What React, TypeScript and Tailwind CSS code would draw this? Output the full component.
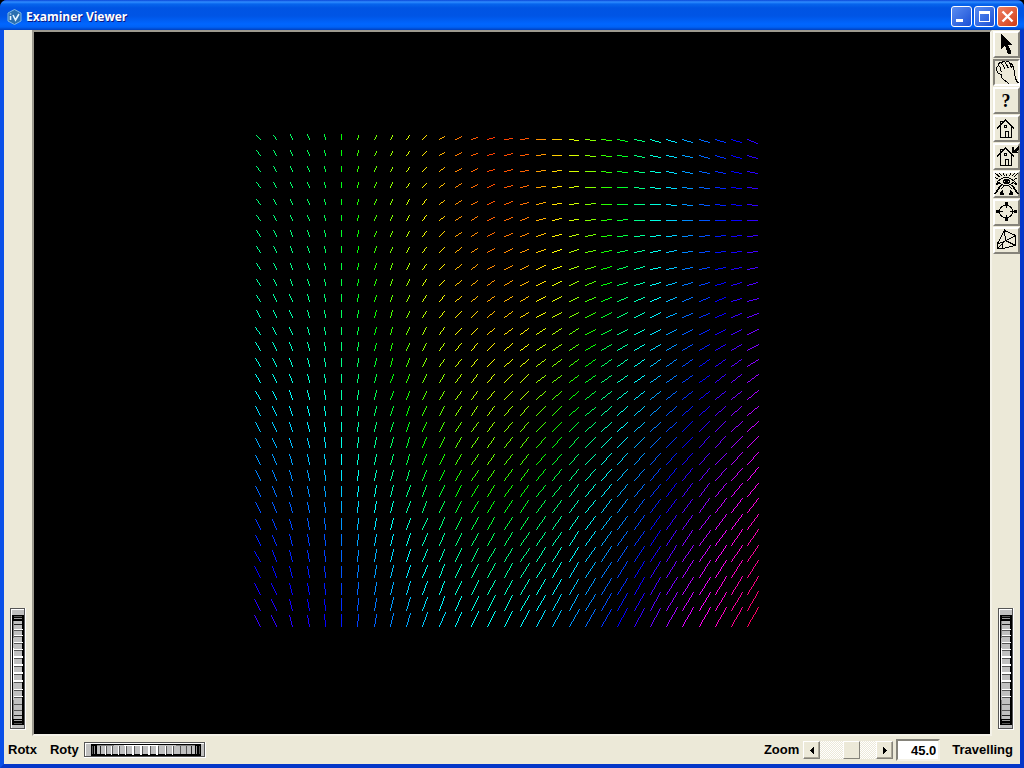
import { useState } from "react"
import type { ReactNode } from "react"

const STEP = 16.25
const CELLS = 31

// arrow lengths sampled every 5 cells, rows go from top to bottom
const DX = [
  [-4, 0, 4, 8, 9.5, 10, 10],
  [-4, 0, 4, 8, 9.5, 10, 10],
  [-4.2, 0, 4, 8, 9.5, 10, 10.5],
  [-5, 0, 4.2, 8, 9.5, 10, 10.5],
  [-5.2, 0, 4.3, 8, 9.5, 10.2, 10.7],
  [-5.5, 0, 4.6, 8.2, 9.7, 10.4, 10.8],
  [-5.8, 0, 4.8, 8.4, 9.8, 10.6, 10.8],
]
const DY = [
  [-4.4, -4.7, -3.6, -1.2, 1, 3, 3.6],
  [-5.4, -5.4, -4.8, -3, -1, 0, 0],
  [-6.5, -6.7, -5.8, -5, -4.2, -3.8, -3.4],
  [-8.2, -8.3, -8, -7.6, -7.2, -7.2, -7.8],
  [-9.5, -10, -10, -10, -10.4, -11, -11.8],
  [-10.3, -11, -11.7, -12.7, -13.8, -14.8, -15.8],
  [-11, -11.7, -13.6, -15.4, -17, -18.8, -19.2],
]
// hues sampled every 2 columns and every 5 rows
const HUE = [
  [145, 143, 135, 105, 82, 53, 28, 13, 19, 48, 88, 126, 170, 202, 228, 250],
  [150, 147, 140, 116, 90, 60, 35, 22, 28, 54, 90, 132, 173, 207, 233, 251],
  [160, 156, 148, 128, 98, 72, 50, 38, 45, 68, 104, 145, 180, 213, 240, 260],
  [178, 174, 164, 147, 122, 95, 78, 68, 72, 95, 128, 165, 197, 226, 252, 275],
  [205, 202, 190, 170, 148, 124, 104, 95, 104, 130, 160, 190, 220, 245, 270, 293],
  [232, 228, 221, 202, 184, 165, 150, 141, 146, 162, 187, 215, 242, 270, 296, 318],
  [253, 249, 242, 225, 209, 193, 182, 177, 181, 195, 215, 240, 264, 292, 314, 337],
]

function sample(table: number[][], col: number, row: number, colStep: number) {
  const c = col / colStep
  const r = row / 5
  const c0 = Math.min(Math.floor(c), table[0].length - 2)
  const r0 = Math.min(Math.floor(r), table.length - 2)
  const fc = c - c0
  const fr = r - r0
  const top = table[r0][c0] * (1 - fc) + table[r0][c0 + 1] * fc
  const bottom = table[r0 + 1][c0] * (1 - fc) + table[r0 + 1][c0 + 1] * fc
  return top * (1 - fr) + bottom * fr
}

// one unit square per step, so a line never gets thicker than a pixel
function pixelLine(x: number, y: number, dx: number, dy: number) {
  const steps = Math.max(Math.abs(dx), Math.abs(dy), 1)
  let d = ""
  for (let i = 0; i <= steps; i++) {
    d += `M${Math.round(x + (dx * i) / steps)} ${Math.round(y + (dy * i) / steps)}h1v1h-1z`
  }
  return d
}

function VectorField() {
  const lines: ReactNode[] = []
  for (let row = 0; row < CELLS; row++) {
    for (let col = 0; col < CELLS; col++) {
      const x = Math.floor(8.4 + col * STEP)
      const y = Math.floor(11 + row * STEP)
      const dx = Math.round(sample(DX, col, row, 5))
      const dy = Math.round(sample(DY, col, row, 5))
      lines.push(
        <path
          key={`${row}-${col}`}
          d={pixelLine(x, y, dx, dy)}
          fill={`hsl(${Math.round(sample(HUE, col, row, 2))} 100% 50%)`}
        />
      )
    }
  }
  return (
    <svg width="520" height="510" viewBox="0 0 520 510" shapeRendering="crispEdges" aria-label="Vector field">
      {lines}
    </svg>
  )
}

// [position, highlight thickness, line colour] of each groove along the wheel
const GROOVES: [number, number, string][] = [
  [16, 0, "#222"],
  [22, 1, "#555"],
  [28, 1, "#555"],
  [35, 1, "#555"],
  [42, 1, "#555"],
  [50, 2, "#555"],
  [58, 2, "#555"],
  [66, 2, "#555"],
  [74, 2, "#555"],
  [82, 1, "#555"],
  [89, 1, "#555"],
  [96, 0, "#555"],
  [102, 0, "#555"],
  [107, 0, "#222"],
]

function Wheel({ label, vertical = false }: { label: string; vertical?: boolean }) {
  return (
    <div className={vertical ? "relative h-[122px] w-4 shrink-0" : "relative h-4 w-[122px] shrink-0"}>
      <svg
        className="block"
        width={vertical ? 16 : 122}
        height={vertical ? 122 : 16}
        viewBox={vertical ? "0 0 16 122" : "0 0 122 16"}
        shapeRendering="crispEdges"
        aria-hidden="true"
      >
        <g transform={vertical ? undefined : "matrix(0 1 1 0 0 0)"}>
          <rect width="16" height="122" fill="#fff" />
          <rect width="15" height="121" fill="#555" />
          <rect x="1" y="1" width="14" height="120" fill="#fff" />
          <rect x="2" y="2" width="13" height="118" fill="#c0c0c0" />
          <rect x="14" y="1" width="1" height="120" fill="#555" />
          <rect x="1" y="120" width="14" height="1" fill="#555" />
          <rect x="2" y="7" width="12" height="110" fill="#000" />
          <rect x="3" y="13" width="9" height="98" fill="#808080" />
          <rect x="4" y="13" width="8" height="98" fill="#c0c0c0" />
          <rect x="3" y="30" width="1" height="62" fill="#c0c0c0" />
          <rect x="3" y="40" width="1" height="34" fill="#fff" />
          <rect x="4" y="8" width="8" height="1" fill="#555" />
          <rect x="4" y="10" width="8" height="1" fill="#999" />
          <rect x="4" y="112" width="8" height="1" fill="#999" />
          <rect x="4" y="115" width="8" height="1" fill="#555" />
          {GROOVES.map(([y, shine, color]) => (
            <g key={y}>
              <rect x="4" y={y - shine} width="9" height={shine} fill="#fff" />
              <rect x="4" y={y} width="8" height="1" fill={color} />
            </g>
          ))}
        </g>
      </svg>
      <input
        type="range"
        aria-label={label}
        className={
          vertical
            ? "absolute inset-0 m-0 h-full w-full opacity-0 [writing-mode:vertical-lr]"
            : "absolute inset-0 m-0 h-full w-full opacity-0"
        }
      />
    </div>
  )
}

function Icon({ children }: { children: ReactNode }) {
  return (
    <svg
      className="block shrink-0"
      width="27"
      height="27"
      viewBox="0 0 27 27"
      fill="none"
      stroke="#000"
      strokeWidth="1"
      shapeRendering="crispEdges"
      aria-hidden="true"
    >
      {children}
    </svg>
  )
}

function House() {
  return (
    <>
      <path d="M4 13.5 L12.5 5 L21 13.5" strokeWidth="1.5" />
      <path d="M7.5 11 V22.5 H18.5 V11 M7.5 10 V6.5 H9.5 V8" />
      <path d="M12.5 22 V16.5 H15.5 V22" />
      <rect x="11.5" y="10.5" width="2" height="2" />
    </>
  )
}

const TOOLS: { name: string; icon: ReactNode }[] = [
  {
    name: "Pick",
    icon: (
      <Icon>
        <path d="M8 3 V18 L11 15 H12 L15 23 H18 V20 L15 14 H19 Z" fill="#000" stroke="none" />
      </Icon>
    ),
  },
  {
    name: "View",
    icon: (
      <Icon>
        <path d="M16.5 25.5 L13.5 22.5 L11.5 21.5 L8.5 18.5 V15.5 L5.5 14.5 L3.5 11.5 V8.5 L5.5 6.5 L7.5 8.5 V11.5 L9.5 13.5" />
        <path d="M5.5 6.5 V4.5 L7.5 3.5 L9.5 5.5 L12.5 10.5 M8.5 4.5 L9.5 2.5 H11.5 L13.5 5.5 L15.5 9.5 M12.5 3.5 L13.5 2.5 H15.5 L17.5 5.5 L18.5 9.5 M16.5 4.5 H18.5 L20.5 8.5 L21.5 13.5 L22.5 19.5 L24.5 23.5 H26" />
      </Icon>
    ),
  },
  { name: "Help", icon: null },
  { name: "Home", icon: <Icon><House /></Icon> },
  {
    name: "Set home",
    icon: (
      <Icon>
        <House />
        <path d="M19 4 V10 H25 V9 H23 L26 6 V3 H25 L21 7 V4 Z" fill="#000" stroke="none" />
      </Icon>
    ),
  },
  {
    name: "View all",
    icon: (
      <Icon>
        <path d="M4.5 10.5 L8.5 7.5 L11.5 6.5 H14.5 L17.5 7.5 L21.5 10.5 L17.5 13.5 L14.5 14.5 H11.5 L8.5 13.5 Z" />
        <path d="M11.5 8.5 H15.5 L16.5 10.5 L15.5 12.5 H11.5 L10.5 10.5 Z" />
        <path d="M12 9 H15 V12 H12 Z" fill="#000" stroke="none" />
        <path d="M2.5 2.5 L7.5 6.5 M2.5 6.5 L5.5 8.5 M6.5 2.5 L9.5 5.5 M10.5 2.5 L11.5 5.5 M13.5 2.5 V4.5 M17.5 2.5 L16.5 5.5 M21.5 2.5 L18.5 5.5 M24.5 2.5 L20.5 6.5 M24.5 6.5 L21.5 8.5" />
        <path d="M8 14 L2 23 M19 14 L25 23 M3 14 L5 12 M24 14 L22 12" strokeWidth="1.5" />
        <path d="M10.5 15.5 L7.5 18.5 M16.5 15.5 L19.5 18.5" />
        <path d="M7 21 L10 19 V22 H11 V24 H7 Z M20 21 L17 19 V22 H16 V24 H20 Z" fill="#000" stroke="none" />
      </Icon>
    ),
  },
  {
    name: "Seek",
    icon: (
      <Icon>
        <circle cx="13" cy="12.5" r="6.5" />
        <path d="M12 3 H15 V6 H12 Z M12 19 H15 V22 H12 Z M3 11 H6 V14 H3 Z M21 11 H24 V14 H21 Z" fill="#000" stroke="none" />
        <path d="M13.5 6 V9 M13.5 16 V19 M6 12.5 H10 M17 12.5 H21" />
      </Icon>
    ),
  },
  {
    name: "Projection",
    icon: (
      <Icon>
        <path d="M11.5 3.5 L22.5 8.5 V18.5 L9.5 21.5 L4.5 21.5 V16.5 L11.5 3.5 L12.5 13.5 L22.5 18.5 M4.5 16.5 L9.5 15.5 L22.5 8.5 M9.5 15.5 V21.5 M12.5 13.5 L4.5 21.5" />
      </Icon>
    ),
  },
]

const raised = "border border-t-white border-l-white border-r-[#85837a] border-b-[#85837a] shadow-[inset_-1px_-1px_0_#aca899]"

function TitleBar() {
  const button = "flex h-[21px] w-[21px] items-center justify-center rounded-[3px] border border-white"
  return (
    <header className="flex h-[30px] shrink-0 items-center rounded-t-[7px] bg-[linear-gradient(to_bottom,#0a46d8_0px,#2f8cff_2px,#0765ed_4px,#0054e3_8px,#0055e5_16px,#0066ff_24px,#0062f6_27px,#0040bf_30px)] pt-[3px] pr-[6px] pl-[7px]">
      <svg className="mr-1 block" width="15" height="16" viewBox="0 0 15 16" aria-hidden="true">
        <path d="M7.5 .5 L14 4 V12 L7.5 15.5 L1 12 V4 Z" fill="#2a6fb0" stroke="#7db8e6" />
        <path d="M3.5 7 V11 M3.5 4.5 V5.5 M6 6 L8.5 11 L12 5" fill="none" stroke="#e4f4ff" strokeWidth="1.6" />
      </svg>
      <h1 className="flex-1 font-['Open_Sans',sans-serif] text-xs font-bold text-white [text-shadow:1px_1px_0_#0a1883]">
        Examiner Viewer
      </h1>
      <div className="flex gap-[2px]">
        <button aria-label="Minimize" className={`${button} bg-linear-to-br from-[#5a8cf0] to-[#1b4fd6]`}>
          <svg width="19" height="19" aria-hidden="true"><rect x="4" y="12" width="7" height="3" fill="#fff" /></svg>
        </button>
        <button aria-label="Maximize" className={`${button} bg-linear-to-br from-[#5a8cf0] to-[#1b4fd6]`}>
          <svg width="19" height="19" shapeRendering="crispEdges" aria-hidden="true">
            <path d="M4 4 H15 V15 H4 Z M5 7 V14 H14 V7 Z" fill="#fff" fillRule="evenodd" />
          </svg>
        </button>
        <button aria-label="Close" className={`${button} bg-linear-to-br from-[#f08060] to-[#d03a10]`}>
          <svg width="19" height="19" aria-hidden="true"><path d="M4.5 4.5 L14.5 14.5 M14.5 4.5 L4.5 14.5" stroke="#fff" strokeWidth="2.4" /></svg>
        </button>
      </div>
    </header>
  )
}

function Toolbar() {
  const [active, setActive] = useState("View")
  return (
    <nav className="flex flex-col gap-px pt-px" aria-label="Viewer tools">
      {TOOLS.map((tool) => (
        <button
          key={tool.name}
          aria-label={tool.name}
          onClick={() => setActive(tool.name)}
          className={`flex h-[27px] w-[27px] items-center justify-center border-2 ${
            active === tool.name
              ? "border-t-[#85837a] border-l-[#85837a] border-r-white border-b-white"
              : "border-t-white border-l-white border-r-[#85837a] border-b-[#85837a]"
          }`}
        >
          {tool.icon ?? <span className="font-['Liberation_Serif',serif] text-lg leading-4 font-bold">?</span>}
        </button>
      ))}
    </nav>
  )
}

function ZoomControl() {
  const [position, setPosition] = useState(58)
  const [angle, setAngle] = useState("45.0")
  return (
    <div className="flex items-center">
      <label htmlFor="zoom" className="mr-1">Zoom</label>
      <button aria-label="Zoom out" onClick={() => setPosition(position - 1)} className={`flex h-[18px] w-[17px] items-center justify-center ${raised}`}>
        <svg width="4" height="7" shapeRendering="crispEdges" aria-hidden="true"><path d="M4 0 V7 L0 3.5 Z" /></svg>
      </button>
      <input
        id="zoom"
        type="range"
        value={position}
        onChange={(e) => setPosition(Number(e.target.value))}
        className="m-0 block h-[18px] w-14 appearance-none bg-[repeating-conic-gradient(#fff_0_25%,#ece9d8_0_50%)] bg-[length:2px_2px] [&::-webkit-slider-thumb]:h-[18px] [&::-webkit-slider-thumb]:w-[17px] [&::-webkit-slider-thumb]:appearance-none [&::-webkit-slider-thumb]:border [&::-webkit-slider-thumb]:border-t-white [&::-webkit-slider-thumb]:border-l-white [&::-webkit-slider-thumb]:border-r-[#85837a] [&::-webkit-slider-thumb]:border-b-[#85837a] [&::-webkit-slider-thumb]:bg-[#ece9d8]"
      />
      <button aria-label="Zoom in" onClick={() => setPosition(position + 1)} className={`flex h-[18px] w-[17px] items-center justify-center ${raised}`}>
        <svg width="4" height="7" shapeRendering="crispEdges" aria-hidden="true"><path d="M0 0 V7 L4 3.5 Z" /></svg>
      </button>
      <input
        aria-label="Zoom angle"
        value={angle}
        onChange={(e) => setAngle(e.target.value)}
        className="mr-3 ml-[3px] block h-[22px] w-11 border-2 border-t-[#85837a] border-r-[#f4f2e8] border-b-[#f4f2e8] border-l-[#85837a] bg-white pr-[2px] text-right"
      />
      <span>Travelling</span>
    </div>
  )
}

export default function App() {
  return (
    <div className="bg-black">
      <div className="flex min-h-screen flex-col rounded-t-[7px] bg-[#0847dd] font-['Liberation_Sans',Arial,sans-serif] text-[13px] leading-4 font-bold text-black">
        <TitleBar />
        <div className="flex flex-1 flex-col border-x-4 border-b-4 border-t-0 border-r-[#0537c8] border-b-[#0537c8] border-l-[#0a50e8] bg-[#ece9d8]">
          <div className="flex flex-1">
            <aside className="flex w-7 shrink-0 flex-col items-center justify-end pb-[6px]">
              <Wheel label="Rotx" vertical />
            </aside>
            <main className="flex flex-1 items-center justify-center border-2 border-t-[#9d9a8f] border-r-[#f4f2e8] border-b-[#f4f2e8] border-l-[#9d9a8f] bg-black">
              <VectorField />
            </main>
            <aside className="flex w-7 shrink-0 flex-col items-center justify-between pb-[6px]">
              <Toolbar />
              <Wheel label="Travelling" vertical />
            </aside>
          </div>
          <footer className="flex h-7 items-center justify-between pr-[7px] pl-1">
            <div className="flex items-center">
              <span className="mr-[13px]">Rotx</span>
              <span className="mr-[5px]">Roty</span>
              <Wheel label="Roty" />
            </div>
            <ZoomControl />
          </footer>
        </div>
      </div>
    </div>
  )
}
